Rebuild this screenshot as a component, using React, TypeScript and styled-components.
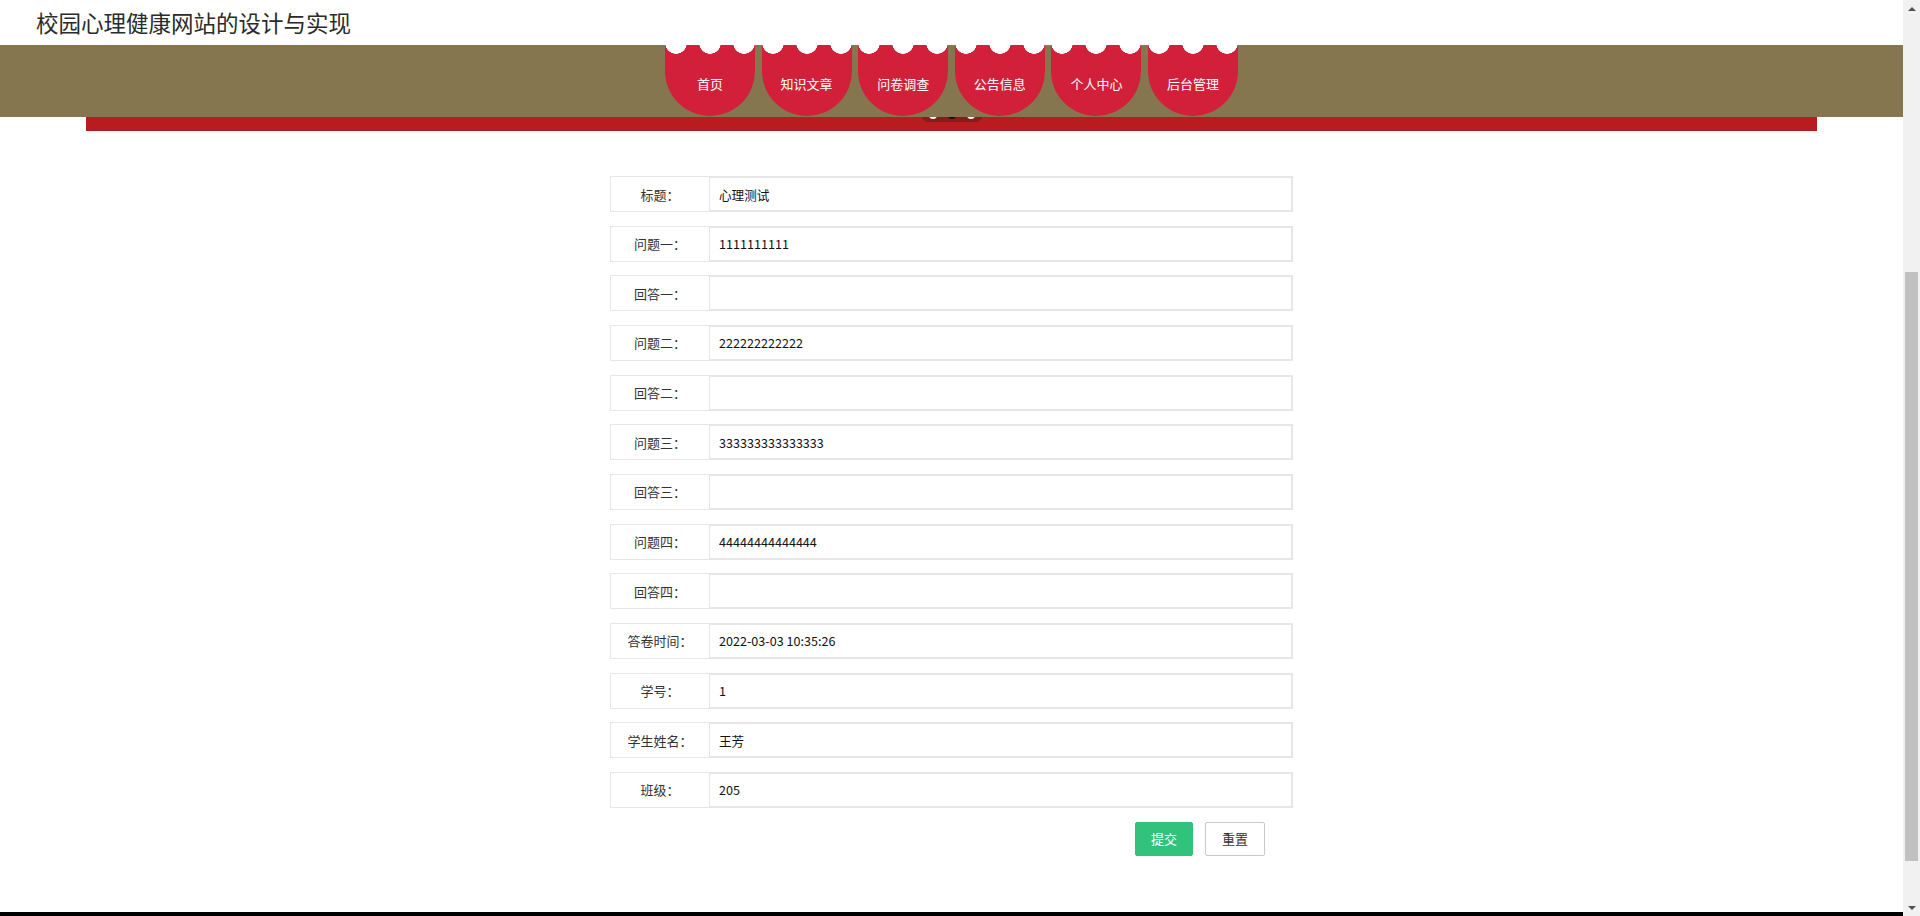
import React, { useLayoutEffect } from "react";
import styled, { createGlobalStyle } from "styled-components";

const GlobalStyle = createGlobalStyle`
  html {
    scroll-behavior: auto;
  }
  body {
    margin: 0 17px 0 0;
    background: #fff;
    font-family: "Noto Sans CJK SC", "Noto Sans", sans-serif;
    color: #333;
  }
`;

const Header = styled.header`
  position: fixed;
  top: 0;
  left: 0;
  right: 17px;
  z-index: 10;
`;

const TitleBar = styled.div`
  height: 45px;
  background: #fff;
  display: flex;
  align-items: center;
  padding-left: 36px;
`;

const SiteTitle = styled.h1`
  margin: 0;
  font-size: 22.5px;
  font-weight: 400;
  color: #2b2b2b;
  line-height: 1;
`;

const NavBar = styled.nav`
  height: 72px;
  background: #857650;
  display: flex;
  justify-content: center;
`;

const NavList = styled.div`
  display: flex;
  gap: 6.6px;
  align-items: flex-start;
`;

const NavItem = styled.a`
  width: 90px;
  height: 71px;
  box-sizing: border-box;
  padding-top: 29px;
  display: flex;
  justify-content: center;
  color: #fff;
  font-size: 13px;
  line-height: 20px;
  text-decoration: none;
  border-radius: 0 0 45px 45px;
  background:
    radial-gradient(circle at 11px -2px, #fff 10.5px, transparent 11px),
    radial-gradient(circle at 45px -2px, #fff 10.5px, transparent 11px),
    radial-gradient(circle at 79px -2px, #fff 10.5px, transparent 11px),
    #d2203a;
  cursor: pointer;
`;

const Main = styled.main`
  padding-top: 117px;
`;

const Banner = styled.div`
  position: relative;
  height: 410px;
  margin: 0 86px;
  background: #b91c1f;
`;

const Indicator = styled.div`
  position: absolute;
  left: 50%;
  bottom: 9px;
  transform: translateX(-50%);
  width: 62px;
  height: 16px;
  box-sizing: border-box;
  padding-bottom: 3px;
  border-radius: 8px;
  background: #8d1a1a;
  display: flex;
  align-items: flex-end;
  justify-content: center;
  gap: 11px;
`;

const Dot = styled.span<{ $active?: boolean }>`
  width: 8px;
  height: 8px;
  border-radius: 50%;
  background: ${(p) => (p.$active ? "#111" : "#fff")};
`;

const Form = styled.form`
  width: 683px;
  margin: 45px auto 0;
  display: flex;
  flex-direction: column;
  gap: 13.67px;
`;

const Row = styled.div`
  height: 36px;
  box-sizing: border-box;
  border: 1px solid #e6e6e6;
  display: flex;
`;

const Label = styled.label`
  width: 98px;
  flex-shrink: 0;
  display: flex;
  align-items: center;
  justify-content: center;
  font-size: 13px;
  color: #333;
`;

const Input = styled.input`
  flex: 1;
  min-width: 0;
  height: 34px;
  box-sizing: border-box;
  border: 1px solid #e6e6e6;
  padding: 0 9px;
  margin: 0;
  font-family: inherit;
  font-size: 12.6px;
  color: #111;
  background: #fff;
  outline: none;
`;

const Actions = styled.div`
  display: flex;
  justify-content: flex-end;
  gap: 12px;
  padding-right: 28px;
  margin-bottom: 56px;
`;

const Button = styled.button<{ $primary?: boolean }>`
  height: 34px;
  width: ${(p) => (p.$primary ? "58px" : "60px")};
  box-sizing: border-box;
  border-radius: 2px;
  border: 1px solid ${(p) => (p.$primary ? "#31c27c" : "#c9c9c9")};
  background: ${(p) => (p.$primary ? "#31c27c" : "#fff")};
  color: ${(p) => (p.$primary ? "#fff" : "#333")};
  font-family: inherit;
  font-size: 13px;
  padding: 0;
  cursor: pointer;
`;

const Footer = styled.footer`
  height: 63px;
  background: #000;
`;

/* the window scrollbar, drawn since the headless browser hides its own */
const ScrollTrack = styled.div`
  position: fixed;
  top: 0;
  right: 0;
  bottom: 0;
  width: 17px;
  background: #f1f1f1;
  display: flex;
  flex-direction: column;
  align-items: center;
  z-index: 20;
`;

const ScrollArrow = styled.span<{ $down?: boolean }>`
  height: 17px;
  display: flex;
  align-items: center;
  justify-content: center;
  margin-top: ${(p) => (p.$down ? "auto" : "0")};
  &::before {
    content: "";
    border-left: 4px solid transparent;
    border-right: 4px solid transparent;
    ${(p) =>
      p.$down ? "border-top: 4px solid #505050;" : "border-bottom: 4px solid #505050;"}
  }
`;

const ScrollThumb = styled.div`
  width: 13px;
  height: 589px;
  margin-top: 255px;
  background: #c1c1c1;
`;

const navs = ["首页", "知识文章", "问卷调查", "公告信息", "个人中心", "后台管理"];

const fields = [
  { label: "标题：", value: "心理测试" },
  { label: "问题一：", value: "1111111111" },
  { label: "回答一：", value: "" },
  { label: "问题二：", value: "222222222222" },
  { label: "回答二：", value: "" },
  { label: "问题三：", value: "333333333333333" },
  { label: "回答三：", value: "" },
  { label: "问题四：", value: "44444444444444" },
  { label: "回答四：", value: "" },
  { label: "答卷时间：", value: "2022-03-03 10:35:26" },
  { label: "学号：", value: "1" },
  { label: "学生姓名：", value: "王芳" },
  { label: "班级：", value: "205" },
];

const App: React.FC = () => {
  useLayoutEffect(() => {
    window.scrollTo(0, 396);
  }, []);

  return (
    <>
      <GlobalStyle />
      <Header>
        <TitleBar>
          <SiteTitle>校园心理健康网站的设计与实现</SiteTitle>
        </TitleBar>
        <NavBar>
          <NavList>
            {navs.map((n) => (
              <NavItem key={n}>{n}</NavItem>
            ))}
          </NavList>
        </NavBar>
      </Header>
      <Main>
        <Banner>
          <Indicator>
            <Dot />
            <Dot $active />
            <Dot />
          </Indicator>
        </Banner>
        <Form onSubmit={(e) => e.preventDefault()}>
          {fields.map((f) => (
            <Row key={f.label}>
              <Label>{f.label}</Label>
              <Input defaultValue={f.value} />
            </Row>
          ))}
          <Actions>
            <Button type="submit" $primary>提交</Button>
            <Button type="reset">重置</Button>
          </Actions>
        </Form>
      </Main>
      <Footer />
      <ScrollTrack>
        <ScrollArrow />
        <ScrollThumb />
        <ScrollArrow $down />
      </ScrollTrack>
    </>
  );
};

export default App;
